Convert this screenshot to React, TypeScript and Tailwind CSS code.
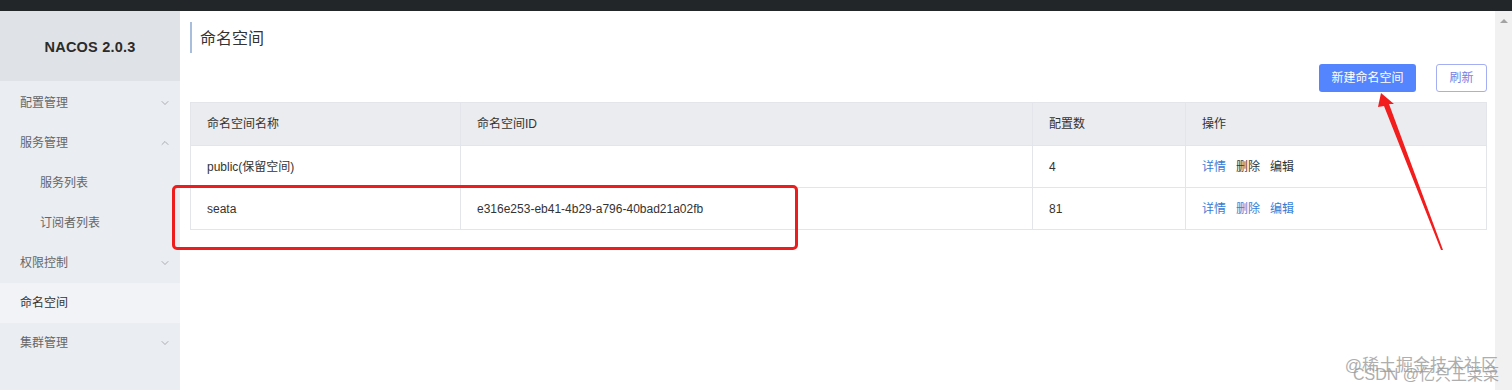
import { ChevronDown, ChevronUp } from "lucide-react";

const font = { fontFamily: '"Liberation Sans", "Noto Sans CJK SC", sans-serif' };

interface MenuItem {
  label: string;
  sub?: boolean;
  arrow?: "down" | "up";
  active?: boolean;
}

const menu: MenuItem[] = [
  { label: "配置管理", arrow: "down" },
  { label: "服务管理", arrow: "up" },
  { label: "服务列表", sub: true },
  { label: "订阅者列表", sub: true },
  { label: "权限控制", arrow: "down" },
  { label: "命名空间", active: true },
  { label: "集群管理", arrow: "down" },
];

const rows = [
  { name: "public(保留空间)", id: "", count: "4", allBlue: false },
  { name: "seata", id: "e316e253-eb41-4b29-a796-40bad21a02fb", count: "81", allBlue: true },
];

function Sidebar() {
  return (
    <aside className="w-[180px] shrink-0 bg-[#eaedf1] flex flex-col">
      <div className="h-[70px] bg-[#dfe2e6] flex items-center justify-center pt-[3px]">
        <span className="text-[14.5px] font-bold text-[#2b2b2b] tracking-[0.2px]">NACOS 2.0.3</span>
      </div>
      <nav className="pt-[2px]">
        {menu.map((m) => (
          <div
            key={m.label}
            className={`h-[40px] flex items-center justify-between pr-[9px] text-[12px] ${
              m.sub ? "pl-[40px]" : "pl-[20px]"
            } ${m.active ? "bg-[#f2f3f6] text-[#333]" : "text-[#666]"}`}
          >
            <span>{m.label}</span>
            {m.arrow === "down" && <ChevronDown className="w-[12px] h-[12px] text-[#8a8a8a]" strokeWidth={1.3} />}
            {m.arrow === "up" && <ChevronUp className="w-[12px] h-[12px] text-[#8a8a8a]" strokeWidth={1.3} />}
          </div>
        ))}
      </nav>
    </aside>
  );
}

function NamespaceTable() {
  return (
    <table className="w-full border-collapse border border-[#e3e5ea] text-[12px] text-[#333]">
      <colgroup>
        <col className="w-[270px]" />
        <col className="w-[572px]" />
        <col className="w-[153px]" />
        <col />
      </colgroup>
      <thead>
        <tr className="bg-[#ebecf0] h-[43px]">
          <th className="text-left font-normal px-[16px] border-r border-[#e3e5ea]">命名空间名称</th>
          <th className="text-left font-normal px-[16px] border-r border-[#e3e5ea]">命名空间ID</th>
          <th className="text-left font-normal px-[16px] border-r border-[#e3e5ea]">配置数</th>
          <th className="text-left font-normal px-[16px]">操作</th>
        </tr>
      </thead>
      <tbody>
        {rows.map((r) => (
          <tr key={r.name} className="h-[42px] border-t border-[#e3e5ea]">
            <td className="px-[16px] border-r border-[#e3e5ea]">{r.name}</td>
            <td className="px-[16px] border-r border-[#e3e5ea]">{r.id}</td>
            <td className="px-[16px] border-r border-[#e3e5ea]">{r.count}</td>
            <td className="px-[16px]">
              <span className="text-[#3a7bd5] mr-[10px]">详情</span>
              <span className={`mr-[10px] ${r.allBlue ? "text-[#3a7bd5]" : "text-[#333]"}`}>删除</span>
              <span className={r.allBlue ? "text-[#3a7bd5]" : "text-[#333]"}>编辑</span>
            </td>
          </tr>
        ))}
      </tbody>
    </table>
  );
}

export default function App() {
  return (
    <div className="w-[1512px] h-[390px] overflow-hidden flex flex-col bg-white relative" style={font}>
      <div className="h-[11px] bg-[#232629] shrink-0" />
      <div className="flex flex-1 min-h-0">
        <Sidebar />
        <main className="flex-1 pl-[10px] pr-[8px] pt-[11px]">
          <div className="border-l-2 border-[#a8bfdc] h-[31px] flex items-center pl-[8px]">
            <h1 className="text-[16px] text-[#333] font-normal pt-[2px]">命名空间</h1>
          </div>
          <div className="flex justify-end gap-[20px] mt-[11px] mb-[10px]">
            <button className="h-[28px] w-[97px] rounded-[3px] bg-[#5584ff] text-white text-[12px]">新建命名空间</button>
            <button className="h-[28px] w-[51px] rounded-[3px] border border-[#a4aef2] bg-white text-[#7580e4] text-[12px]">
              刷新
            </button>
          </div>
          <NamespaceTable />
        </main>
        <div className="w-[17px] shrink-0 bg-[#f1f1f1] flex justify-center pt-[8px]">
          <div className="w-0 h-0 border-l-[4px] border-r-[4px] border-b-[4px] border-l-transparent border-r-transparent border-b-[#a3a3a3]" />
        </div>
      </div>

      {/* annotation: red highlight box */}
      <div className="absolute left-[172px] top-[185px] w-[626px] h-[65px] border-[3px] border-[#ee1d1d] rounded-[5px] pointer-events-none" />

      {/* annotation: red arrow */}
      <svg className="absolute left-0 top-0 pointer-events-none" width="1512" height="390">
        <polygon points="1381,93 1394,104 1389,104 1443,250 1441,250 1384,106 1378,107" fill="#f21d1d" />
      </svg>

      {/* watermark (overlapping as in the screenshot) */}
      <div className="absolute right-[14px] bottom-[16px] text-[17px] leading-none text-[#9a9a9a] opacity-80 pointer-events-none">
        @稀土掘金技术社区
      </div>
      <div className="absolute right-[13px] bottom-[7px] text-[16px] leading-none text-[#9a9a9a] opacity-80 pointer-events-none">
        CSDN @亿只王菜菜
      </div>
    </div>
  );
}
